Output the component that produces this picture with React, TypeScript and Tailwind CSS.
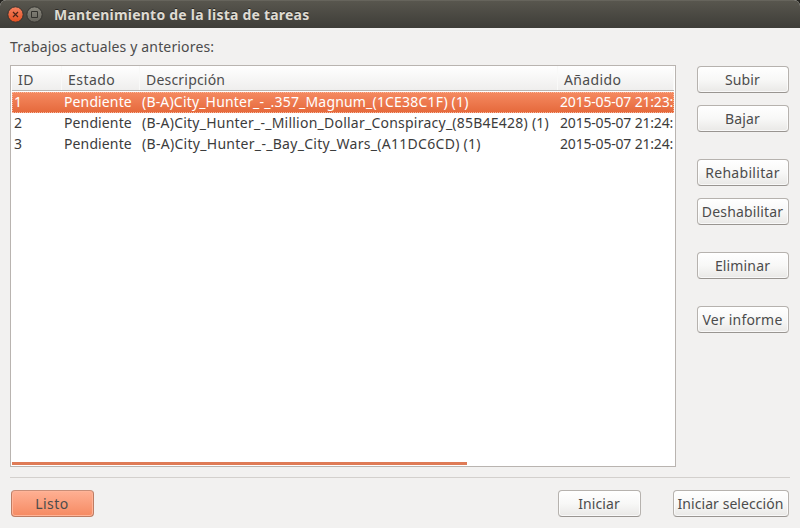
import type { ReactNode } from "react";

const columns = [
  { title: "ID", width: "w-[50px]", tracking: "tracking-[0.5px]" },
  { title: "Estado", width: "w-[78px]", tracking: "tracking-[0.45px]" },
  { title: "Descripción", width: "w-[418px]", tracking: "tracking-[0.2px]" },
  { title: "Añadido", width: "w-[116px]", tracking: "tracking-[0.35px]" },
];

const jobs = [
  { id: "1", name: "(B-A)City_Hunter_-_.357_Magnum_(1CE38C1F) (1)", added: "2015-05-07 21:23:", selected: true, tracking: "tracking-[0.18px]" },
  { id: "2", name: "(B-A)City_Hunter_-_Million_Dollar_Conspiracy_(85B4E428) (1)", added: "2015-05-07 21:24:", selected: false, tracking: "tracking-[0.235px]" },
  { id: "3", name: "(B-A)City_Hunter_-_Bay_City_Wars_(A11DC6CD) (1)", added: "2015-05-07 21:24:", selected: false, tracking: "tracking-[0.29px]" },
];

function Button({
  children,
  width = "w-[92px]",
  tracking = "tracking-[0.15px]",
  primary = false,
}: {
  children: ReactNode;
  width?: string;
  tracking?: string;
  primary?: boolean;
}) {
  const look = primary
    ? "border-[#bd7c63] border-t-[#c98d77] bg-linear-to-b from-[#ffb093] to-[#f58a62] shadow-[inset_0_0_0_1px_#ffb498]"
    : "border-[#b6b2ae] border-b-[#999591] bg-linear-to-b from-white via-[#f8f8f7] to-[#e9e8e6] shadow-[inset_0_0_0_1px_#ffffffb0]";
  return (
    <button className={`flex h-[27px] shrink-0 items-center justify-center rounded-[4px] border pr-px whitespace-nowrap text-[#4c4c4c] ${look} ${width} ${tracking}`}>
      <span>{children}</span>
    </button>
  );
}

export default function App() {
  return (
    <div className="h-[528px] w-[800px] bg-[#24231f]">
      <div className="flex h-full flex-col overflow-hidden rounded-t-[6px] bg-[#f2f1f0] font-['Noto_Sans','Open_Sans',sans-serif] text-[14px] leading-[21px] text-[#4c4c4c]">
        <header className="flex h-7 shrink-0 items-center border-t border-[#66645c] bg-linear-to-b from-[#58564e] to-[#3e3d38] pl-[7px]">
          <svg width="37" height="18" viewBox="0 0 37 18" fill="none" className="mt-px">
            <defs>
              <linearGradient id="close" x2="0" y2="1">
                <stop stopColor="#f58261" />
                <stop offset="1" stopColor="#e34f20" />
              </linearGradient>
              <linearGradient id="max" x2="0" y2="1">
                <stop stopColor="#8a887e" />
                <stop offset="1" stopColor="#64625b" />
              </linearGradient>
            </defs>
            <circle cx="8.5" cy="8.5" r="7.7" fill="url(#close)" stroke="#34332f" />
            <path d="m6 6 5 5m0-5-5 5" stroke="#4a2418" strokeWidth="1.2" />
            <circle cx="27.5" cy="8.5" r="7.7" fill="url(#max)" stroke="#34332f" />
            <path d="M24.5 5.5h6v6h-6z" stroke="#33322e" />
          </svg>
          <h1 className="ml-[10px] font-bold tracking-[0.22px] text-[#dfdbd2] text-shadow-[0_-1px_0_#2b2a27]">
            Mantenimiento de la lista de tareas
          </h1>
        </header>

        <p className="mt-2 ml-[10px] h-[29px] shrink-0 tracking-[0.16px]">Trabajos actuales y anteriores:</p>

        <main className="flex h-[402px] shrink-0 gap-[21px] pl-[10px]">
          <section className="flex w-[666px] flex-col border border-[#b9b4b0] bg-white px-px">
            <div className="flex h-[25px] shrink-0 items-center border-b border-[#b9b5b1] bg-linear-to-b from-white to-[#efeeed]">
              {columns.map((c) => (
                <div key={c.title} className={`flex h-full shrink-0 items-center border-r border-[#f9f9f8] pt-[3px] pl-[6px] ${c.width}`}>
                  <span className={c.tracking}>{c.title}</span>
                </div>
              ))}
            </div>
            <div className="mt-px">
              {jobs.map((j) => (
                <div
                  key={j.id}
                  className={`flex h-[21px] w-[662px] leading-[19px] whitespace-nowrap ${
                    j.selected
                      ? "bg-linear-to-b from-[#f58a61] to-[#e5683a] text-white outline-1 -outline-offset-1 outline-dotted outline-[#f9b79d]"
                      : "text-[#3c3c3c]"
                  }`}
                >
                  <div className="w-[50px] shrink-0 pl-[2px]">{j.id}</div>
                  <div className="w-[78px] shrink-0 pl-[2px] tracking-[0.12px]">Pendiente</div>
                  <div className={`w-[418px] shrink-0 pl-[2px] ${j.tracking}`}>{j.name}</div>
                  <div className="shrink-0 pl-[2px] tracking-[-0.19px]">{j.added}</div>
                </div>
              ))}
            </div>
            <div className="mt-auto mb-px h-[3px] w-[455px] shrink-0 bg-[#df7b56]" />
          </section>

          <aside className="flex flex-col gap-[27px] pt-px">
            <div className="flex flex-col gap-3">
              <Button>Subir</Button>
              <Button>Bajar</Button>
            </div>
            <div className="flex flex-col gap-3">
              <Button tracking="tracking-[0.3px]">Rehabilitar</Button>
              <Button>Deshabilitar</Button>
            </div>
            <Button>Eliminar</Button>
            <Button tracking="tracking-[0.2px]">Ver informe</Button>
          </aside>
        </main>

        <footer className="mx-[10px] mt-[10px] flex border-t border-[#d3d0cd] pt-3 pr-px pl-px">
          <Button primary width="w-[83px]" tracking="tracking-[0.5px]">Listo</Button>
          <div className="ml-auto flex gap-8">
            <Button width="w-[83px]" tracking="tracking-[0.1px]">Iniciar</Button>
            <Button width="w-[116px]" tracking="tracking-[0.06px]">Iniciar selección</Button>
          </div>
        </footer>
      </div>
    </div>
  );
}
